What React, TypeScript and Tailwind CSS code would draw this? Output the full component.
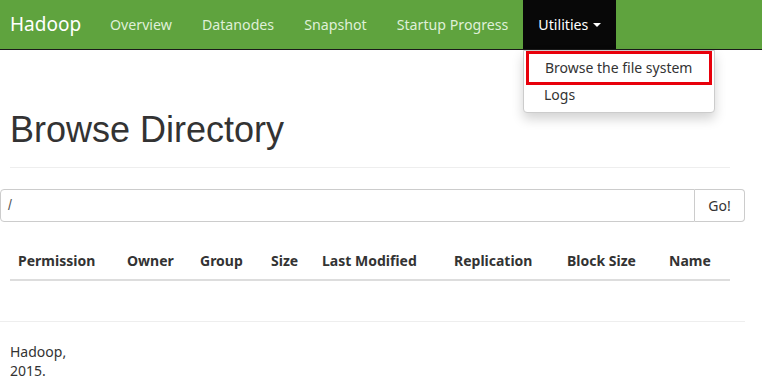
const navLinks = ['Overview', 'Datanodes', 'Snapshot', 'Startup Progress']

const columns = [
    { label: 'Permission', w: 'w-[109px]' },
    { label: 'Owner', w: 'w-[73px]' },
    { label: 'Group', w: 'w-[71px]' },
    { label: 'Size', w: 'w-[51px]' },
    { label: 'Last Modified', w: 'w-[132px]' },
    { label: 'Replication', w: 'w-[113px]' },
    { label: 'Block Size', w: 'w-[102px]' },
    { label: 'Name', w: 'w-[69px]' },
]

export default function App() {
    return (
        <div className="relative min-h-[391px] w-[762px] bg-white font-['Noto_Sans','Open_Sans',sans-serif] text-[14px] text-[#333]">
            {/* navbar */}
            <nav className="flex h-[50px] items-stretch border-b border-[#1a1a1a] bg-[#5fa33e]">
                <span className="flex w-[95px] items-center pl-[10px] text-[19px] text-white">Hadoop</span>
                <div className="flex text-[14.2px]">
                    {navLinks.map(l => (
                        <span key={l} className="flex items-center px-[15px] text-[#dff0d8]">{l}</span>
                    ))}
                    <span className="flex items-center gap-[5px] bg-[#080808] px-[15px] text-white">
                        Utilities
                        <svg width="8" height="4" viewBox="0 0 8 4"><path d="M0 0h8L4 4z" fill="#fff" /></svg>
                    </span>
                </div>
            </nav>

            {/* dropdown */}
            <div className="absolute left-[523px] top-[50px] w-[192px] rounded-b-[4px] border border-[#ccc] bg-white pb-[2px] shadow-[0_6px_12px_rgba(0,0,0,0.175)]">
                <div className="mx-[2px] border-[3px] border-[#e8000b] px-[16px] py-[3px] leading-[22px]">Browse the file system</div>
                <div className="px-[20px] pb-[5px] leading-[20px]">Logs</div>
            </div>

            <div className="px-[10px]">
                <h1 className="pt-[58px] font-['Liberation_Sans',Arial,sans-serif] text-[36px] leading-[44px] text-[#333]">Browse Directory</h1>
                <hr className="mt-[15px] w-[720px] border-[#eee]" />
            </div>

            {/* path input */}
            <div className="mt-[21px] flex h-[33px] w-[745px]">
                <div className="flex flex-1 items-center rounded-l-[4px] border border-[#ccc] px-[7px] font-['Liberation_Sans',Arial,sans-serif] text-[#555]">/</div>
                <div className="flex w-[50px] items-center justify-center rounded-r-[4px] border border-l-0 border-[#ccc] text-[#333]">Go!</div>
            </div>

            {/* table header */}
            <div className="mt-[21px] ml-[10px] flex w-[720px] border-b-2 border-[#ddd] font-bold">
                {columns.map(c => (
                    <div key={c.label} className={`${c.w} px-[8px] py-[8px] leading-[20px]`}>{c.label}</div>
                ))}
            </div>

            <hr className="mt-[40px] w-[745px] border-[#eee]" />

            <div className="px-[10px] pt-[20px] leading-[19px]">
                <p>Hadoop,</p>
                <p>2015.</p>
            </div>
        </div>
    )
}
